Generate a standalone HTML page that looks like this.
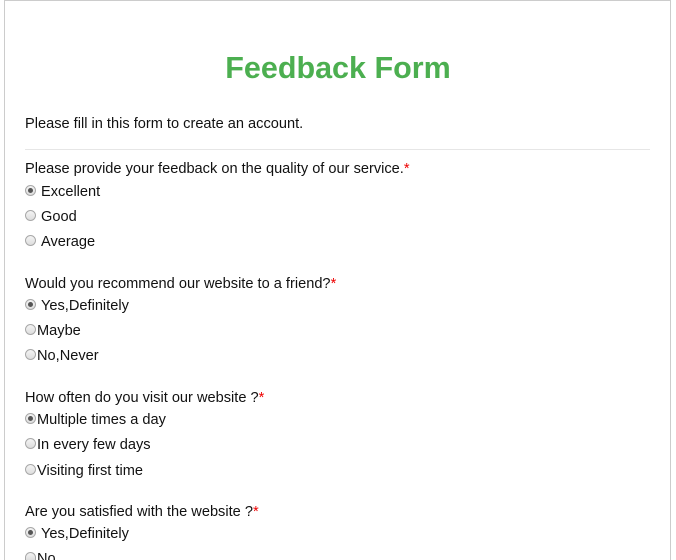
<!DOCTYPE html>
<html><head><style>
html,body{margin:0;height:560px;overflow:hidden;}
body{background:#fff;font-family:"Liberation Sans",sans-serif;font-size:14.6px;color:#111;position:relative;}
.box{position:absolute;left:4px;top:0;width:665px;height:560px;border:1px solid #ccc;border-bottom:0;box-sizing:border-box;width:667px;}
.t{position:absolute;white-space:nowrap;line-height:16px;}
h1{position:absolute;left:0;width:676px;top:48px;margin:0;text-align:center;color:#4caf50;font-size:30.5px;line-height:40px;font-weight:bold;}
hr{position:absolute;left:25px;width:625px;top:149px;margin:0;border:0;border-top:1px solid #e6e6e6;}
.r{position:absolute;left:25px;width:9px;height:9px;border:1px solid #a8a8a8;border-radius:50%;background:linear-gradient(#f4f4f4,#ddd);}
.r.c::after{content:"";position:absolute;left:2px;top:2px;width:5px;height:5px;border-radius:50%;background:#555;}
.s{color:#e00;}
</style></head><body>
<div class="box"></div>
<h1>Feedback Form</h1>
<div class="t" style="left:25px;top:116px">Please fill in this form to create an account.</div>
<hr>
<div class="t" style="left:25px;top:161px">Please provide your feedback on the quality of our service.<span class="s">*</span></div>
<div class="r c" style="top:185px"></div><div class="t" style="left:41px;top:184px">Excellent</div>
<div class="r" style="top:210px"></div><div class="t" style="left:41px;top:209px">Good</div>
<div class="r" style="top:235px"></div><div class="t" style="left:41px;top:234px">Average</div>

<div class="t" style="left:25px;top:276px">Would you recommend our website to a friend?<span class="s">*</span></div>
<div class="r c" style="top:299px"></div><div class="t" style="left:41px;top:298px">Yes,Definitely</div>
<div class="r" style="top:324px"></div><div class="t" style="left:37px;top:323px">Maybe</div>
<div class="r" style="top:349px"></div><div class="t" style="left:37px;top:348px">No,Never</div>

<div class="t" style="left:25px;top:390px">How often do you visit our website ?<span class="s">*</span></div>
<div class="r c" style="top:413px"></div><div class="t" style="left:37px;top:412px">Multiple times a day</div>
<div class="r" style="top:438px"></div><div class="t" style="left:37px;top:437px">In every few days</div>
<div class="r" style="top:464px"></div><div class="t" style="left:37px;top:463px">Visiting first time</div>

<div class="t" style="left:25px;top:504px">Are you satisfied with the website ?<span class="s">*</span></div>
<div class="r c" style="top:527px"></div><div class="t" style="left:41px;top:526px">Yes,Definitely</div>
<div class="r" style="top:552px;height:7px;border-radius:6px 6px 0 0;border-bottom:0"></div><div class="t" style="left:37px;top:551px;height:9px;overflow:hidden">No</div>
</body></html>
